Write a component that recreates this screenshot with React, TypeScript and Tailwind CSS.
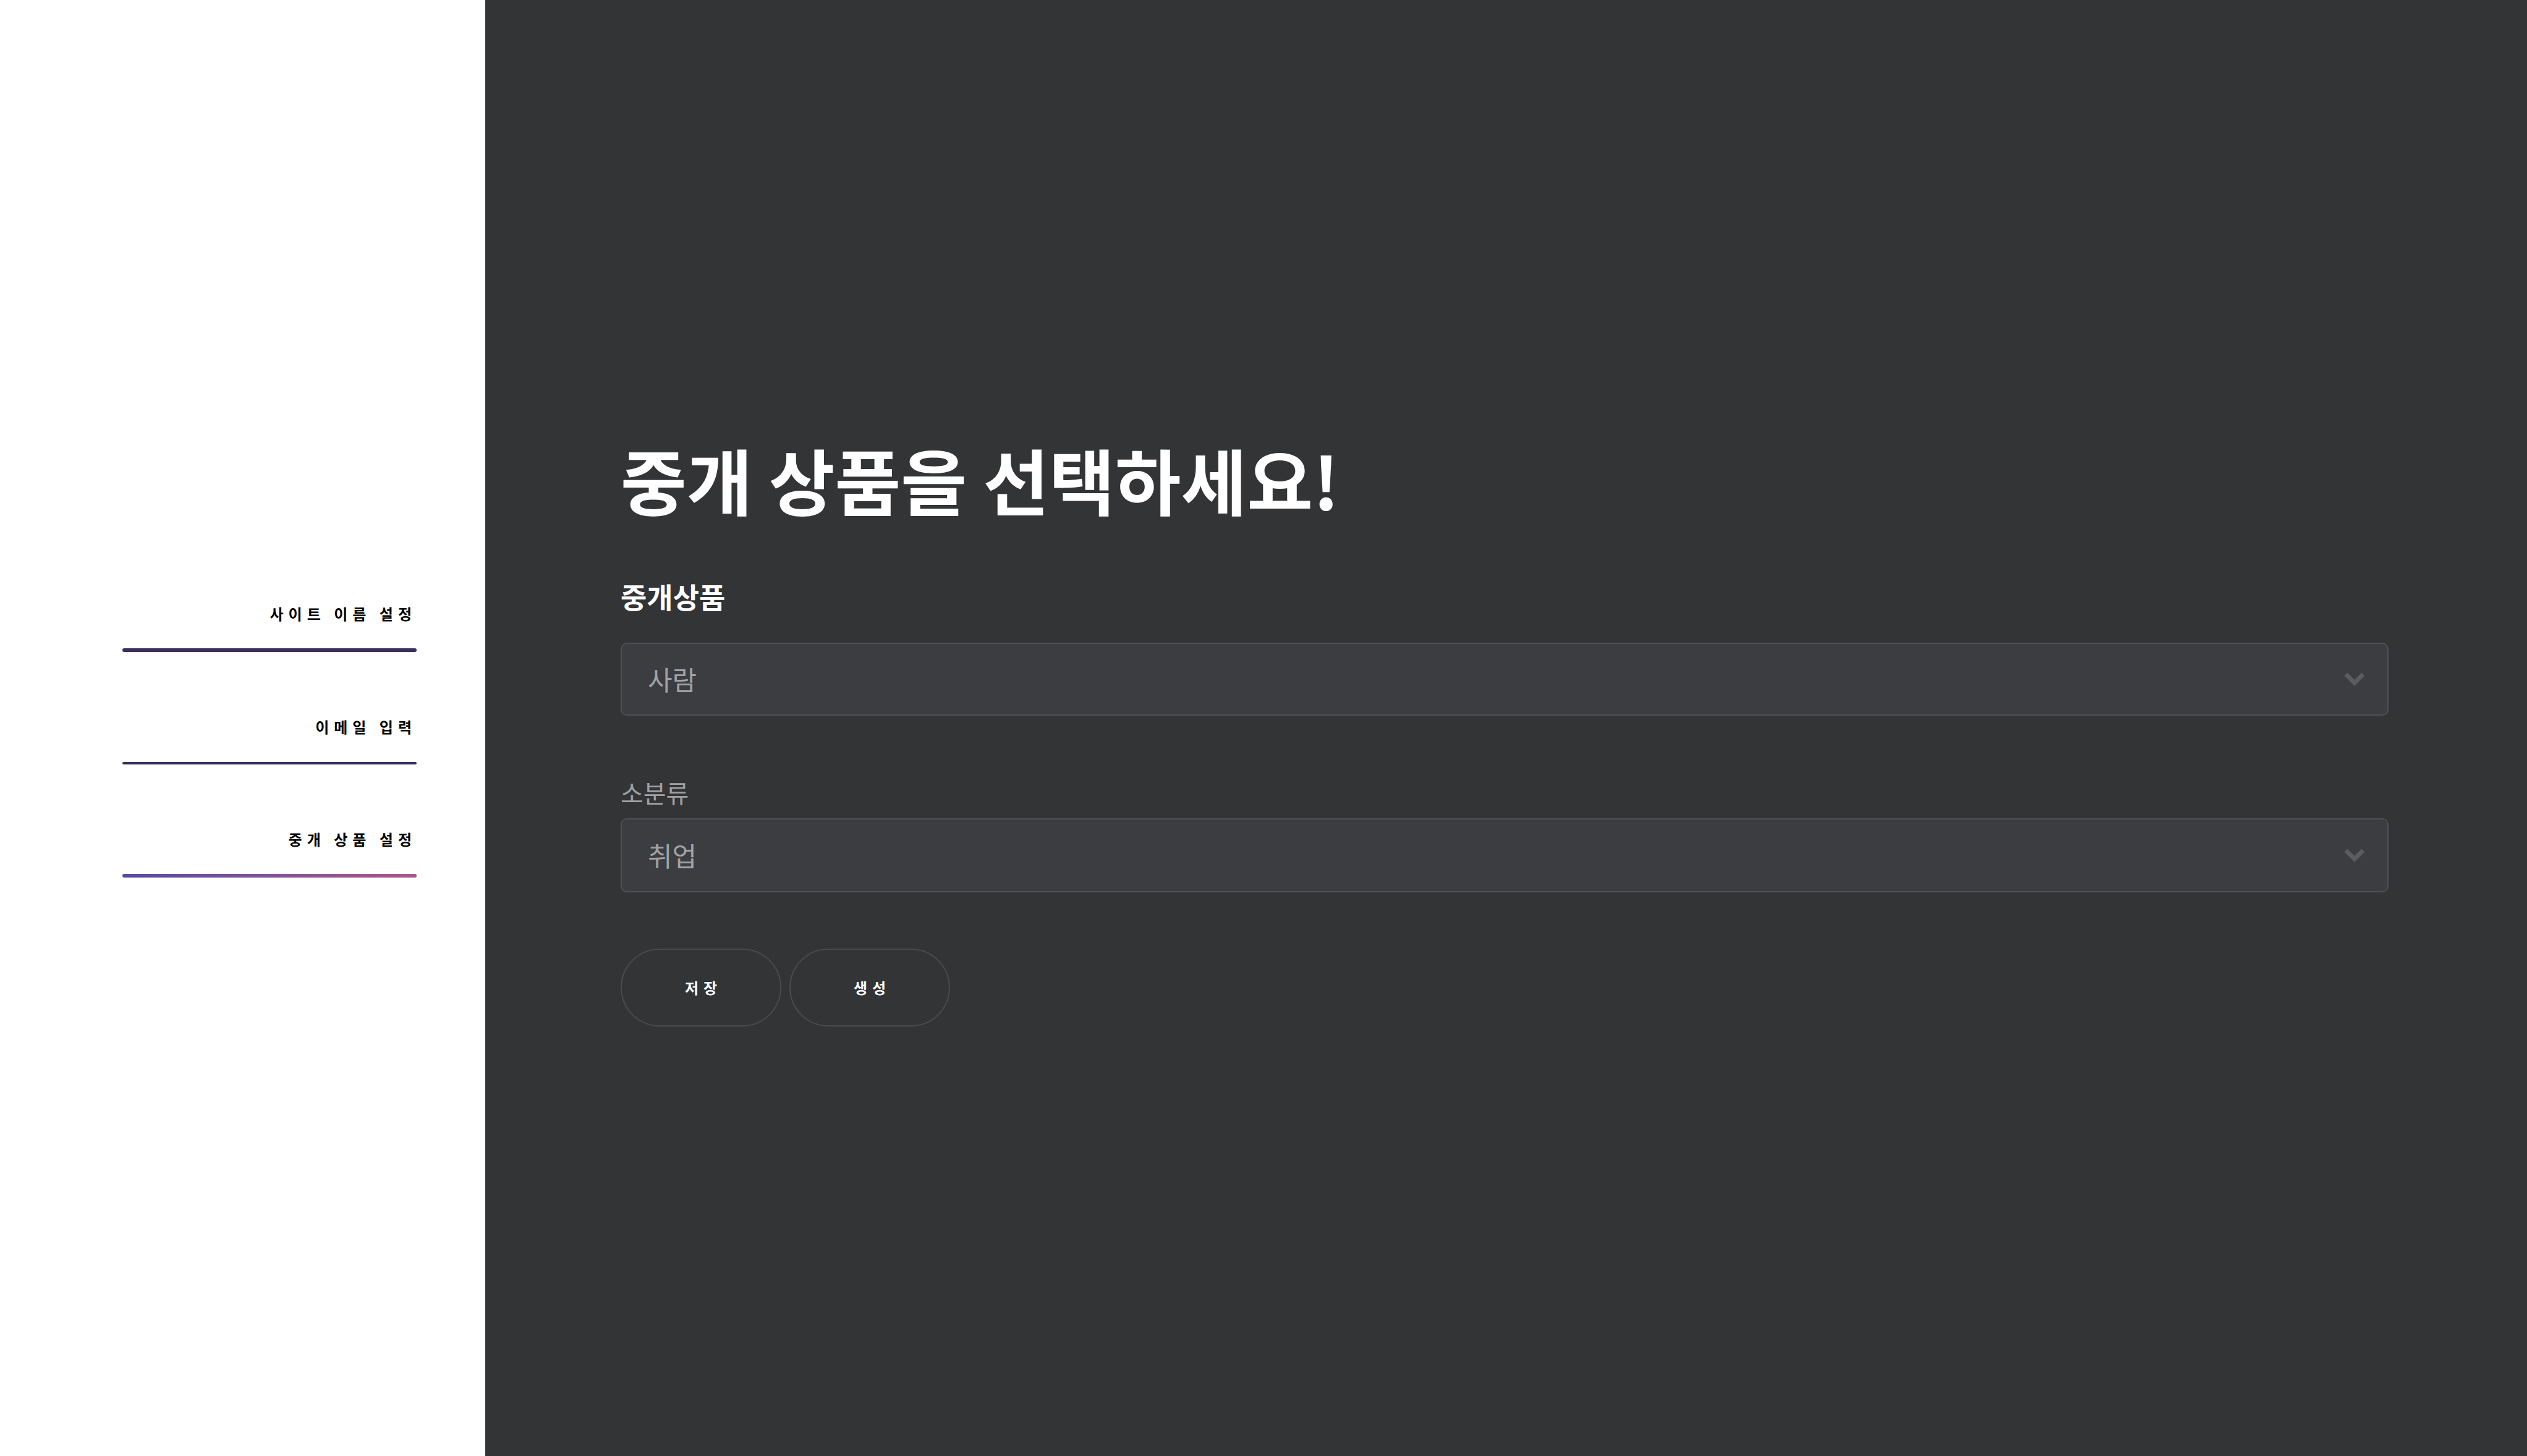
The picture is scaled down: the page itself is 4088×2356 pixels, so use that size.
import React from "react";

const FONT = { fontFamily: '"Noto Sans CJK KR", "Noto Sans", sans-serif' };

function Chevron() {
  return (
    <svg width="34" height="22" viewBox="0 0 34 22" fill="none" className="shrink-0">
      <polyline points="3,3 17,17 31,3" stroke="#5b5c5f" strokeWidth="7" strokeLinecap="butt" strokeLinejoin="miter" fill="none" />
    </svg>
  );
}

function SelectBox({ value, className }: { value: string; className: string }) {
  return (
    <div
      className={`flex items-center justify-between rounded-[10px] border-2 border-[#4f5053] bg-[#3c3d40] pl-[42px] pr-[36px] ${className}`}
    >
      <span className="text-[43px] leading-none text-[#a2a2a5]">{value}</span>
      <Chevron />
    </div>
  );
}

function NavItem({ label, line, lineClass, mt }: { label: string; line: string; lineClass: string; mt: string }) {
  return (
    <div className="flex w-[476px] flex-col items-end">
      <span className="text-[24px] font-bold leading-[30px] tracking-[8px] text-black">{label}</span>
      <div className={`${mt} w-full rounded-full ${lineClass} ${line}`} />
    </div>
  );
}

export default function App() {
  return (
    <div className="flex h-[2356px] w-full" style={FONT}>
      <aside className="flex w-[785px] shrink-0 flex-col items-end justify-center bg-white pr-[111px] pt-[42px]">
        <div className="flex flex-col gap-[106px]">
          <NavItem label="사이트 이름 설정" line="h-[6px]" mt="mt-[41px]" lineClass="bg-[#3a305f]" />
          <NavItem label="이메일 입력" line="h-[4px]" mt="mt-[42px]" lineClass="bg-[#3a305f]" />
          <NavItem label="중개 상품 설정" line="h-[6px]" mt="mt-[41px]" lineClass="bg-gradient-to-r from-[#574aa0] to-[#ab568a]" />
        </div>
      </aside>
      <main className="flex flex-1 flex-col justify-center bg-[#333436] pl-[219px] pr-[224px] pt-[20px]">
        <h1 className="text-[116px] font-bold leading-none tracking-[0px] text-white">중개 상품을 선택하세요!</h1>
        <div className="mt-[109px] text-[46px] font-bold leading-[46px] tracking-[0px] text-white">중개상품</div>
        <SelectBox value="사람" className="mt-[53px] h-[118px]" />
        <div className="mt-[104px] text-[40px] leading-[40px] tracking-[0px] text-[#a0a0a3]">소분류</div>
        <SelectBox value="취업" className="mt-[22px] h-[120px]" />
        <div className="mt-[91px] flex gap-[13px]">
          <button className="flex h-[126px] w-[260px] items-center justify-center rounded-full border-2 border-[#4a4b4e] pl-[8px] text-[24px] font-bold tracking-[8px] text-white">
            저장
          </button>
          <button className="flex h-[126px] w-[260px] items-center justify-center rounded-full border-2 border-[#4a4b4e] pl-[8px] text-[24px] font-bold tracking-[8px] text-white">
            생성
          </button>
        </div>
      </main>
    </div>
  );
}
